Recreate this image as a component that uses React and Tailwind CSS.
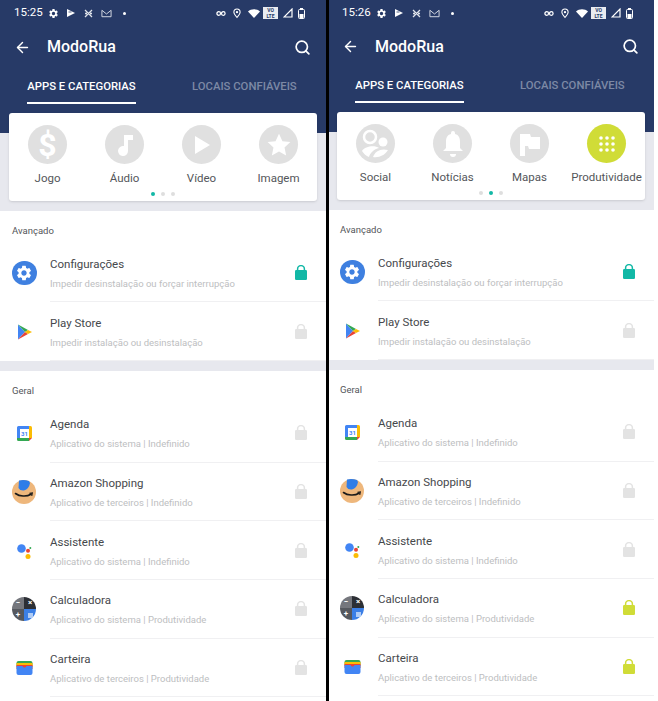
import { ArrowLeft, Search } from "lucide-react";
import { MdSettings } from "react-icons/md";

const NAVY = "bg-[#273a67]";

const geral1 = [
  { nome: "Agenda", sub: "Aplicativo do sistema | Indefinido", icon: "agenda" },
  { nome: "Amazon Shopping", sub: "Aplicativo de terceiros | Indefinido", icon: "amazon" },
  { nome: "Assistente", sub: "Aplicativo do sistema | Indefinido", icon: "assistente" },
  { nome: "Calculadora", sub: "Aplicativo do sistema | Produtividade", icon: "calc", cat: true },
  { nome: "Carteira", sub: "Aplicativo de terceiros | Produtividade", icon: "carteira", cat: true },
];

function Lock({ color }) {
  return (
    <svg width="12" height="15" viewBox="0 0 12 15">
      <path d="M2.6 6V4a3.4 3.4 0 0 1 6.8 0v2" fill="none" stroke={color} strokeWidth="1.5" />
      <rect x="0" y="5" width="12" height="10" rx="1.2" fill={color} />
    </svg>
  );
}

function AppIcon({ tipo }) {
  if (tipo === "config")
    return (
      <div className="w-[24.5px] h-[24.5px] rounded-full bg-[#3f80e0] flex items-center justify-center">
        <MdSettings size={18} color="white" />
      </div>
    );
  if (tipo === "play")
    return (
      <svg width="24" height="24" viewBox="0 0 24 24">
        <path d="M6 4.5 L13 12 L6 19.5 Z" fill="#4285f4" />
        <path d="M6 4.5 L16 10 L13 12 Z" fill="#34a853" />
        <path d="M6 19.5 L16 14 L13 12 Z" fill="#ea4335" />
        <path d="M16 10 L20 12 L16 14 L13 12 Z" fill="#fbbc04" />
      </svg>
    );
  if (tipo === "agenda")
    return (
      <svg width="24" height="24" viewBox="0 0 24 24">
        <rect x="5" y="5" width="15" height="15" rx="1.5" fill="#fff" />
        <path d="M5 6.5A1.5 1.5 0 0 1 6.5 5H17v3H8v9H5Z" fill="#4285f4" />
        <path d="M17 5h1.5A1.5 1.5 0 0 1 20 6.5V17h-3Z" fill="#fbbc04" />
        <path d="M5 17h12v3H6.5A1.5 1.5 0 0 1 5 18.5Z" fill="#34a853" />
        <path d="M17 17h3l-3 3Z" fill="#ea4335" />
        <text x="12.5" y="15" textAnchor="middle" fontSize="6" fontWeight="700" fill="#4285f4" fontFamily="Roboto, sans-serif">31</text>
      </svg>
    );
  if (tipo === "amazon")
    return (
      <svg width="24" height="24" viewBox="0 0 24 24">
        <circle cx="12" cy="12" r="12" fill="#eeb77c" />
        <path d="M7 0.5 Q12 -0.5 17 1 L18 3 Q17 9 12 10.5 Q8 11 6.5 8 Z" fill="#2f7de8" />
        <path d="M3.5 13.5c4 3 11 3.5 15.5 0.8" fill="none" stroke="#1a1a1a" strokeWidth="1.6" strokeLinecap="round" />
        <path d="M17.5 13.3l2.8-0.3-0.6 2.8" fill="none" stroke="#1a1a1a" strokeWidth="1.2" />
      </svg>
    );
  if (tipo === "assistente")
    return (
      <svg width="24" height="24" viewBox="0 0 24 24">
        <circle cx="9.5" cy="9.5" r="4.3" fill="#4285f4" />
        <circle cx="16" cy="11.7" r="2" fill="#ea4335" />
        <circle cx="16" cy="17.5" r="2.5" fill="#fbbc04" />
        <circle cx="18.3" cy="9" r="1" fill="#34a853" />
      </svg>
    );
  if (tipo === "calc")
    return (
      <div className="w-6 h-6 rounded-full overflow-hidden grid grid-cols-2 grid-rows-2 text-white text-[8px] font-bold leading-none">
        <span className="bg-[#75777d] flex items-center justify-center">−</span>
        <span className="bg-[#2c2f35] flex items-center justify-center">×</span>
        <span className="bg-[#55585e] flex items-center justify-center">+</span>
        <span className="bg-[#3b7fe6] flex items-center justify-center">
          <span className="w-[5px] h-[5px] bg-white/60" />
        </span>
      </div>
    );
  return (
    <svg width="24" height="24" viewBox="0 0 24 24">
      <rect x="4.5" y="5" width="16" height="6" rx="2" fill="#34a853" />
      <rect x="4.5" y="7" width="16" height="4" fill="#fbbc04" />
      <rect x="4.5" y="9" width="16" height="4" fill="#ea4335" />
      <path d="M4.5 10h6c1 2 3 2 4 0h6v7a2 2 0 0 1-2 2h-12a2 2 0 0 1-2-2Z" fill="#4285f4" />
    </svg>
  );
}

function Linha({ nome, sub, icon, lockCor }) {
  return (
    <div className="h-[58.7px] flex items-center pl-[12px]">
      <div className="w-[38px] shrink-0">
        <AppIcon tipo={icon} />
      </div>
      <div className="flex-1 h-full flex items-center pr-[19px] border-b border-[#f0f0f2]">
        <div className="flex-1 min-w-0 pt-[2px]">
          <p className="text-[11.5px] leading-[16px] text-[#46484c]">{nome}</p>
          <p className="text-[9.5px] leading-[14px] mt-[5px] text-[#bdbec1] whitespace-nowrap">{sub}</p>
        </div>
        <Lock color={lockCor} />
      </div>
    </div>
  );
}

function Categoria({ label, cor, children }) {
  return (
    <div className="w-[77px] flex flex-col items-center">
      <div className={`w-[39px] h-[39px] rounded-full flex items-center justify-center ${cor}`}>
        {children}
      </div>
      <span className="mt-[6px] text-[11.5px] leading-[16px] text-[#54565a] whitespace-nowrap">{label}</span>
    </div>
  );
}

function Pontos({ ativo }) {
  return (
    <div className="flex justify-center gap-[6px] mt-[6px]">
      {[0, 1, 2].map((i) => (
        <span key={i} className={`w-[4px] h-[4px] rounded-full ${i === ativo ? "bg-[#12b8a6]" : "bg-[#dedede]"}`} />
      ))}
    </div>
  );
}

function CategoriasA() {
  return (
    <>
      <div className="flex justify-between">
        <Categoria label="Jogo" cor="bg-[#e0e0e0]">
          <span className="text-white text-[32px] font-bold leading-none">$</span>
        </Categoria>
        <Categoria label="Áudio" cor="bg-[#e0e0e0]">
          <svg width="20" height="24" viewBox="0 0 20 24" fill="white">
            <path d="M9 2h9v5h-5v11a5 5 0 1 1-4-4.9Z" />
          </svg>
        </Categoria>
        <Categoria label="Vídeo" cor="bg-[#e0e0e0]">
          <svg width="18" height="20" viewBox="0 0 18 20" fill="white">
            <path d="M2 1l15 9-15 9Z" />
          </svg>
        </Categoria>
        <Categoria label="Imagem" cor="bg-[#e0e0e0]">
          <svg width="26" height="26" viewBox="0 0 24 24" fill="white">
            <path d="M12 1.5l3.2 7 7.3 0.8-5.4 5 1.5 7.5L12 18l-6.6 3.8 1.5-7.5-5.4-5 7.3-0.8Z" />
          </svg>
        </Categoria>
      </div>
      <Pontos ativo={0} />
    </>
  );
}

function CategoriasB() {
  return (
    <>
      <div className="flex justify-between">
        <Categoria label="Social" cor="bg-[#e0e0e0]">
          <svg width="39" height="39" viewBox="0 0 39 39" fill="white">
            <circle cx="14" cy="13" r="6" fill="none" stroke="white" strokeWidth="2.5" />
            <circle cx="27" cy="18" r="4.5" />
            <path d="M6 27c3-5 13-6 17-3-5 1-9 5-10 9-3-1-5-3-7-6Z" />
            <path d="M17 33c2-6 8-9 15-7-3 5-9 8-15 7Z" />
          </svg>
        </Categoria>
        <Categoria label="Notícias" cor="bg-[#e0e0e0]">
          <svg width="24" height="28" viewBox="0 0 24 28" fill="white">
            <path d="M12 1a2 2 0 0 1 2 2v1c4 1 5 4 5 8v6l3 3H2l3-3v-6c0-4 1-7 5-8V3a2 2 0 0 1 2-2Z" />
            <path d="M9 24h6a3 3 0 0 1-6 0Z" />
          </svg>
        </Categoria>
        <Categoria label="Mapas" cor="bg-[#e0e0e0]">
          <svg width="24" height="26" viewBox="0 0 24 26" fill="white">
            <path d="M2 3h10l1 3h9v12H11l-1-3H7v10H2Z" />
          </svg>
        </Categoria>
        <Categoria label="Produtividade" cor="bg-[#d0dc37]">
          <svg width="16" height="16" viewBox="0 0 16 16" fill="white">
            {[2, 8, 14].flatMap((y) => [2, 8, 14].map((x) => <circle key={`${x}-${y}`} cx={x} cy={y} r="1.8" />))}
          </svg>
        </Categoria>
      </div>
      <Pontos ativo={1} />
    </>
  );
}

function StatusIcons() {
  return (
    <div className="flex items-center text-white">
      <svg width="10" height="7" viewBox="0 0 11 7" fill="none" stroke="white" strokeWidth="1.4"><circle cx="3" cy="3.5" r="2" /><circle cx="8" cy="3.5" r="2" /></svg>
      <svg className="ml-[7px]" width="8" height="11" viewBox="0 0 9 11" fill="none" stroke="white" strokeWidth="1.2"><path d="M4.5 10C2 7 1 5.5 1 4a3.5 3.5 0 0 1 7 0c0 1.5-1 3-3.5 6Z" /><circle cx="4.5" cy="4" r="0.7" /></svg>
      <svg className="ml-[7px]" width="12" height="9" viewBox="0 0 12 9" fill="white"><path d="M0 2.500C3 -0.500 9 -0.500 12 2.500L6 9Z" /></svg>
      <div className="ml-[3px] w-[15px] h-[12px] bg-white/90 text-[#273a67] text-[5px] font-bold leading-[6px] text-center">
        <div>VO</div>
        <div>LTE</div>
      </div>
      <svg className="ml-[5px]" width="10" height="10" viewBox="0 0 10 10" fill="none" stroke="white" strokeWidth="1.2"><path d="M9 1v8H1Z" /></svg>
      <svg className="ml-[5px]" width="7" height="11" viewBox="0 0 7 11"><rect x="0.5" y="1.5" width="6" height="9" rx="1" fill="none" stroke="white" /><rect x="1.5" y="6" width="4" height="4" fill="white" /><rect x="2" y="0" width="3" height="1.5" fill="white" /></svg>
    </div>
  );
}

function NotifIcons() {
  return (
    <div className="flex items-center ml-[5px]">
      <MdSettings size={11} color="white" />
      <svg className="ml-[7px]" width="10" height="10" viewBox="0 0 10 10" fill="white"><path d="M1 1l8 4-8 4Z" /><path d="M2.5 4h3" stroke="#273a67" strokeWidth="0.8" /></svg>
      <svg className="ml-[8px]" width="9" height="9" viewBox="0 0 9 9" stroke="#dfe3ea" strokeWidth="1.3" fill="none"><path d="M1 1l7 7M8 1L1 8M1 4.5h2M6 4.5h2" /></svg>
      <svg className="ml-[8px]" width="11" height="9" viewBox="0 0 12 9" stroke="#dfe3ea" strokeWidth="1" fill="none"><path d="M1 8V1l5 4 5-4v7Z" /></svg>
      <span className="w-[3px] h-[3px] rounded-full bg-white ml-[11px]" />
    </div>
  );
}

function Tela({ hora, desloca, categorias, corGeral }) {
  return (
    <div className="w-[326px] shrink-0 bg-white overflow-hidden h-[701px] font-['Roboto',sans-serif]">
      <div className={`${NAVY} ${desloca ? "h-[132px]" : "h-[133px]"}`}>
        <div className="h-[25px] flex items-center justify-between pl-[14px] pr-[21px] pt-[1px]">
          <div className="flex items-center">
            <span className="text-white text-[11.5px] leading-none">{hora}</span>
            <NotifIcons />
          </div>
          <StatusIcons />
        </div>
        <div className={`flex items-center pl-[14px] pr-[15px] ${desloca ? "h-[43px]" : "h-[44px]"}`}>
          <ArrowLeft size={17} color="white" strokeWidth={2} />
          <span className="ml-[16px] flex-1 text-white text-[16px] font-medium">ModoRua</span>
          <Search size={17} color="white" strokeWidth={2.4} />
        </div>
        <div className="flex h-[35px] pl-[27px] text-[11.3px] font-medium">
          <div className="w-[109px] h-full pt-[3px] flex items-center justify-center text-white border-b-2 border-white whitespace-nowrap">APPS E CATEGORIAS</div>
          <div className="ml-[56px] h-full pt-[2px] flex items-center text-[#7d89a5] whitespace-nowrap">LOCAIS CONFIÁVEIS</div>
        </div>
      </div>
      <div className="bg-[#e7e8ee] h-[77.5px] px-[9px] flow-root">
        <div className="relative -mt-[20px] h-[88px] bg-white rounded-[3px] shadow-sm pt-[12px]">
          {categorias}
        </div>
      </div>
      <div>
        <p className="pl-[12px] pt-[14px] pb-[7px] text-[9.5px] leading-[12px] text-[#54565a]">Avançado</p>
        <Linha nome="Configurações" sub="Impedir desinstalação ou forçar interrupção" icon="config" lockCor="#12b8a6" />
        <Linha nome="Play Store" sub="Impedir instalação ou desinstalação" icon="play" lockCor="#e3e3e3" />
      </div>
      <div className="h-[10px] bg-[#e7e8ee]" />
      <div>
        <p className="pl-[12px] pt-[14px] pb-[7px] text-[9.5px] leading-[12px] text-[#54565a]">Geral</p>
        {geral1.map((app) => (
          <Linha key={app.nome} {...app} lockCor={app.cat && corGeral ? corGeral : "#e3e3e3"} />
        ))}
      </div>
    </div>
  );
}

export default function App() {
  return (
    <div className="w-[658px] h-[701px] flex bg-white overflow-hidden">
      <Tela hora="15:25" categorias={<CategoriasA />} />
      <div className="w-[3px] -mr-[1px] bg-black shrink-0 relative z-10" />
      <Tela hora="15:26" desloca categorias={<CategoriasB />} corGeral="#d0dc37" />
    </div>
  );
}
